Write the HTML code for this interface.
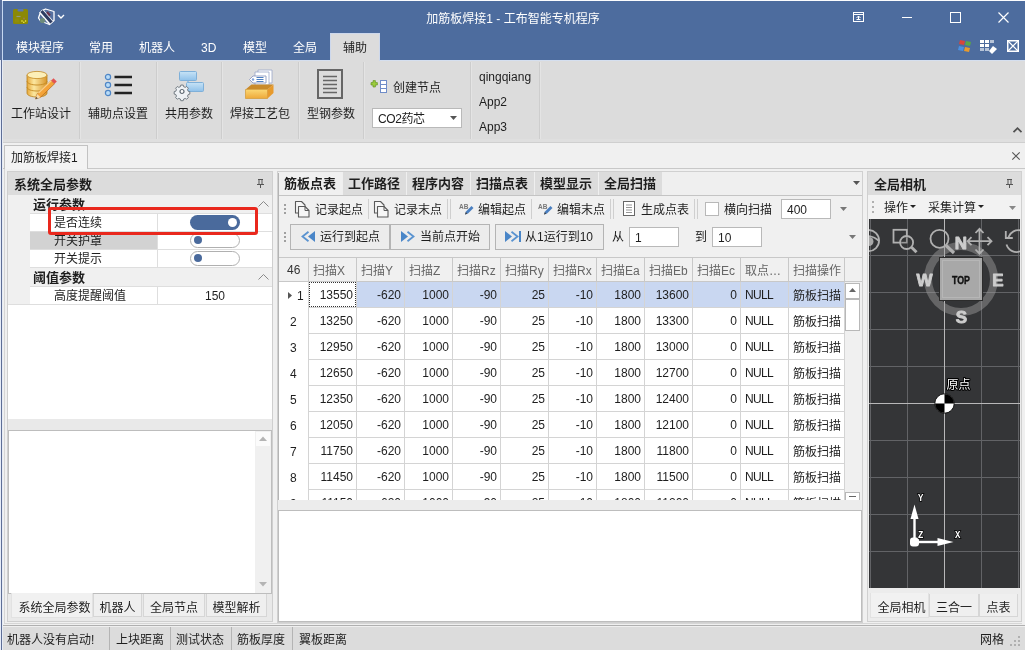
<!DOCTYPE html>
<html lang="zh-CN">
<head>
<meta charset="utf-8">
<title>加筋板焊接1 - 工布智能专机程序</title>
<style>
*{box-sizing:border-box;margin:0;padding:0}
html,body{width:1025px;height:650px;overflow:hidden;background:#f0f0f0}
body{position:relative;font-family:"Liberation Sans","Noto Sans CJK SC",sans-serif;font-size:12px;color:#1e1e1e;line-height:16px}
#app{position:absolute;left:0;top:0;width:1025px;height:650px;will-change:transform}
.a{position:absolute}
.t{position:absolute;white-space:nowrap;line-height:16px;height:16px;margin-top:1px}
.w{color:#fff}
.b{font-weight:bold}
.c{text-align:center}
.r{text-align:right}
svg{position:absolute;overflow:visible}
#title{left:3px;top:1px;width:1022px;height:59px;background:#4d6c9e}
#acttab{left:330px;top:33px;width:50px;height:28px;background:#dcdcdc;border:1px solid #cdd8ec;border-bottom:none}
#ribbon{left:3px;top:60px;width:1022px;height:83px;background:#dcdcdc}
.rs{position:absolute;top:62px;width:2px;height:77px;border-left:1px solid #cdcdcd;border-right:1px solid #e4e4e4}
.panel{position:absolute;background:#f0f0f0;border:1px solid #c6c6c6}
.hd{position:absolute;background:#dcdcdc}
.white{position:absolute;background:#fff}
.tab{position:absolute;height:24px;line-height:23px;text-align:center;white-space:nowrap}
.btab{position:absolute;height:23px;line-height:22px;padding-top:3px;text-align:center;white-space:nowrap;border:1px solid #d6d6d6;border-top:none;background:#efefef}
.inp{position:absolute;background:#fff;border:1px solid #b9b9b9;line-height:21px;padding-left:5px}
.btn{position:absolute;background:#ececec;border:1px solid #b4b4b4}
.hc{position:absolute;top:258px;height:24px;line-height:23px;padding-top:2px;border-right:1px solid #c8c8c8;color:#666;padding-left:4px;white-space:nowrap;overflow:hidden}
.row{position:absolute;left:279px;width:566px;height:26px;background:#fff;overflow:hidden}
.row span{position:absolute;top:0;height:26px;line-height:27px;border-right:1px solid #d4d4d4;border-bottom:1px solid #d4d4d4;text-align:right;padding-right:3px;white-space:nowrap}
.row span.l{text-align:left;padding-left:4px;padding-right:0}
.row span.k{line-height:29px}
.row span.n{letter-spacing:-.7px}
.sel span.s{background:#c9d7f1}
.sb{position:absolute;height:24px;line-height:24px;top:628px;white-space:nowrap}
.sbs{position:absolute;top:627px;width:1px;height:23px;background:#b4b4b4}
</style>
</head>
<body>
<div id="app">
<div class="a" style="left:0;top:0;width:2px;height:60px;background:#58709e"></div><div class="a" style="left:2px;top:0;width:1px;height:60px;background:#c6d8f2"></div><div class="a" style="left:0;top:60px;width:1px;height:590px;background:#e6ecf8"></div><div class="a" style="left:1px;top:60px;width:1px;height:590px;background:#5e6e96"></div><div class="a" style="left:2px;top:60px;width:1px;height:590px;background:#e6ebf4"></div><div class="a" style="left:2px;top:0;width:1023px;height:1px;background:#fbfcfe"></div><div id="title" class="a"></div><div id="ribbon" class="a"></div><div class="a" style="left:3px;top:60px;width:1022px;height:1px;background:#d5dfef"></div><div id="acttab" class="a"></div><div class="t w c" style="left:313px;top:10px;width:400px">加筋板焊接1 - 工布智能专机程序</div><svg style="left:12px;top:8px" width="18" height="17" viewBox="0 0 18 17"><rect x="1" y="1" width="15" height="15" rx="1.500" fill="#8b8905"/><rect x="5.500" y="1" width="6" height="2.500" rx="1" fill="#5d76b0"/><path d="M4.500 8.500h4" stroke="#8e9a86" stroke-width="1.200"/><path d="M4 10.500v4M6 10.500v4" stroke="#96930a" stroke-width="1"/><circle cx="10" cy="13" r=".8" fill="#f6f24a"/><circle cx="11.800" cy="14.300" r=".8" fill="#f6f24a"/><circle cx="13.600" cy="13" r=".8" fill="#f6f24a"/><circle cx="12" cy="10.500" r="1" fill="#9a7a50"/></svg><svg style="left:37px;top:8px" width="30" height="18" viewBox="0 0 30 18"><path d="M4.500 3l4-2 8.500 2.500 0 9-4.500 4-9-3.500-2-3 1-3z" fill="#56709f" stroke="#fff" stroke-width="1.300" stroke-linejoin="round"/><path d="M4 3l10 11.500" stroke="#fff" stroke-width="5.500"/><path d="M4.500 3l10 11.500" stroke="#2e3d63" stroke-width="3.200"/><circle cx="5.500" cy="12.500" r="2.600" fill="#6e8c7c"/><path d="M10 4l3 3.500" stroke="#6b3048" stroke-width="2"/><path d="M21 7l3 3 3-3" fill="none" stroke="#fff" stroke-width="1.400"/></svg><svg style="left:853px;top:12px" width="12" height="11" viewBox="0 0 12 11"><rect x=".5" y=".5" width="10" height="9" fill="none" stroke="#fff"/><path d="M.5 2.5h10M5.5 8V4M3.5 6l2-2 2 2M3.5 7.500h4" fill="none" stroke="#fff"/></svg><div class="a" style="left:902px;top:17px;width:10px;height:1px;background:#fff"></div><div class="a" style="left:950px;top:12px;width:11px;height:11px;border:1px solid #fff"></div><svg style="left:998px;top:12px" width="11" height="11" viewBox="0 0 11 11"><path d="M.5 .5l10 10M10.500 .5l-10 10" stroke="#fff" stroke-width="1.200"/></svg><svg style="left:958px;top:39px" width="14" height="14" viewBox="0 0 14 14"><path d="M2 1l5 1-1 4-5-1z" fill="#d8453a"/><path d="M8 2l5 1-1 4-5-1z" fill="#5aa845"/><path d="M1 7l5 1-1 4-5-1z" fill="#4a8fe0"/><path d="M7 8l5 1-1 4-5-1z" fill="#e69a2e"/></svg><svg style="left:980px;top:40px" width="18" height="14" viewBox="0 0 18 14"><g fill="#fff"><rect x="0" y="0" width="4" height="3"/><rect x="5" y="0" width="4" height="3"/><rect x="10" y="0" width="4" height="3" opacity=".6"/><rect x="0" y="4" width="4" height="3"/><rect x="5" y="4" width="4" height="3"/><rect x="0" y="8" width="4" height="3" opacity=".6"/><rect x="5" y="8" width="4" height="3" opacity=".6"/><path d="M13 6l4 3-5 5-3-3z"/></g></svg><svg style="left:1007px;top:40px" width="12" height="12" viewBox="0 0 12 12"><rect x=".75" y=".75" width="10.500" height="10.500" fill="none" stroke="#fff" stroke-width="1.500"/><path d="M1 1l10 10M11 1l-10 10" stroke="#fff" stroke-width="1.200"/></svg><div class="t w" style="left:16px;top:39px;font-size:12px">模块程序</div><div class="t w" style="left:89px;top:39px;font-size:12px">常用</div><div class="t w" style="left:139px;top:39px;font-size:12px">机器人</div><div class="t w" style="left:201px;top:39px;font-size:12px">3D</div><div class="t w" style="left:243px;top:39px;font-size:12px">模型</div><div class="t w" style="left:293px;top:39px;font-size:12px">全局</div><div class="t" style="left:343px;top:39px">辅助</div><div class="rs" style="left:79px"></div><div class="rs" style="left:156px"></div><div class="rs" style="left:221px"></div><div class="rs" style="left:298px"></div><div class="rs" style="left:363px"></div><div class="rs" style="left:470px"></div><div class="rs" style="left:539px"></div><div class="t" style="left:11px;top:105px">工作站设计</div><div class="t" style="left:88px;top:105px">辅助点设置</div><div class="t" style="left:165px;top:105px">共用参数</div><div class="t" style="left:230px;top:105px">焊接工艺包</div><div class="t" style="left:307px;top:105px">型钢参数</div><svg style="left:24px;top:68px" width="34" height="34" viewBox="0 0 34 34"><defs><linearGradient id="gd" x1="0" x2="1"><stop offset="0" stop-color="#e8a93a"/><stop offset=".35" stop-color="#fbe7a0"/><stop offset="1" stop-color="#d9952a"/></linearGradient></defs><path d="M3 7v18c0 2.500 4.500 4 10 4s10-1.500 10-4V7z" fill="url(#gd)" stroke="#b8801f" stroke-width=".8"/><ellipse cx="13" cy="7" rx="10" ry="3.600" fill="#fcefb8" stroke="#c48a24" stroke-width=".8"/><path d="M3 13c0 2.500 4.500 4 10 4s10-1.500 10-4M3 19c0 2.500 4.500 4 10 4s10-1.500 10-4" fill="none" stroke="#c48a24" stroke-width=".9"/><path d="M11.500 31l1.700-5 14-13.500 3.300 3.300-14 13.500z" fill="#f4a338" stroke="#b5651d" stroke-width=".7"/><path d="M14.500 25l13-12.500" stroke="#fbd08a" stroke-width="1.200"/><path d="M27.200 12.500l2.300-2.200 3.300 3.300-2.300 2.200z" fill="#e25353"/><path d="M11.500 31l1.700-5 3.300 3.300z" fill="#f6dcae"/><path d="M11.500 31l.7-2.100 1.500 1.400z" fill="#333"/></svg>
<svg style="left:104px;top:73px" width="30" height="24" viewBox="0 0 30 24"><g fill="#b9dcf7" stroke="#4f86c6" stroke-width="1.200"><circle cx="4" cy="4" r="2.600"/><circle cx="4" cy="12" r="2.600"/><circle cx="4" cy="20" r="2.600"/></g><path d="M10.500 4h17.500M10.500 12h17.500M10.500 20h17.500" stroke="#222" stroke-width="2.400"/></svg>
<svg style="left:174px;top:70px" width="32" height="30" viewBox="0 0 32 30"><defs><linearGradient id="gb" x1="0" y1="0" x2="0" y2="1"><stop offset="0" stop-color="#c7e3f6"/><stop offset="1" stop-color="#8fc1ea"/></linearGradient></defs><path d="M14 10v7h6" fill="none" stroke="#8ab4d8" stroke-width="1.400"/><rect x="5.500" y="1.500" width="17" height="9" rx="1" fill="url(#gb)" stroke="#7fb0d9"/><rect x="12.500" y="12.500" width="17" height="9" rx="1" fill="url(#gb)" stroke="#7fb0d9"/><g transform="translate(8,21.500)"><path d="M-1.300-7h2.600l.5 1.800 1.700.7 1.600-.9 1.800 1.800-.9 1.600.7 1.700 1.800.5v2.600l-1.800.5-.7 1.700.9 1.600-1.800 1.800-1.600-.9-1.700.7-.5 1.800h-2.600l-.5-1.800-1.700-.7-1.600.9-1.800-1.800.9-1.600-.7-1.700-1.800-.5v-2.600l1.800-.5.7-1.700-.9-1.600 1.800-1.800 1.600.9 1.700-.7z" fill="#eef1f4" stroke="#5d6770" stroke-width=".9" transform="scale(.92)"/><circle r="2" fill="#fff" stroke="#5d6770" stroke-width="1.200"/></g></svg>
<svg style="left:243px;top:68px" width="34" height="33" viewBox="0 0 34 33"><defs><linearGradient id="gg" x1="0" y1="0" x2="0" y2="1"><stop offset="0" stop-color="#fbd773"/><stop offset="1" stop-color="#eea93a"/></linearGradient></defs><path d="M15 2h14v13H15z" fill="#fff" stroke="#9aa6c8" stroke-width=".8"/><path d="M12 4h14v13H12z" fill="#fff" stroke="#9aa6c8" stroke-width=".8"/><path d="M2.500 21.500l6-5h22l-6 5z" fill="#c98a2a"/><path d="M10 8l-3.500 3.500 3.500 3.500h13v-7z" fill="#fff" stroke="#8d99c0" stroke-width=".9"/><circle cx="10" cy="11.500" r="1.200" fill="#7ea0d8"/><path d="M13.500 9.500h7M13.500 11.500h7M13.500 13.500h7" stroke="#4f80c0" stroke-width="1"/><path d="M2.500 21.500h22v9h-22z" fill="url(#gg)" stroke="#d39a34" stroke-width=".7"/><path d="M24.500 21.500l6-5v8.500l-6 5.500z" fill="#e79a2c"/></svg>
<svg style="left:316px;top:68px" width="28" height="32" viewBox="0 0 28 32"><rect x="2" y="2" width="24" height="28" fill="none" stroke="#666" stroke-width="2"/><path d="M7 8.500h14M7 12.500h14M7 16.500h14M7 20.500h14M7 24.500h14" stroke="#666" stroke-width="1.600"/></svg>
<svg style="left:371px;top:79px" width="17" height="15" viewBox="0 0 17 15"><path d="M2.500 2h3v2.500h2.500v3h-2.500v2.500h-3v-2.500h-2.500v-3h2.500z" fill="#9ccc3c" stroke="#5f8f1f" stroke-width=".8" transform="scale(.8) translate(0,0)"/><rect x="9.500" y="1.500" width="6" height="12" fill="#fff" stroke="#6f8cc8"/><path d="M9.500 5.500h6M9.500 9.500h6" stroke="#6f8cc8"/></svg>
<div class="t" style="left:393px;top:79px">创建节点</div><div class="inp" style="left:372px;top:108px;width:90px;height:20px;letter-spacing:-.4px">CO2药芯</div><svg style="left:450px;top:116px" width="7" height="4" viewBox="0 0 7 4"><path d="M0 0h7l-3.500 4z" fill="#555"/></svg><div class="t" style="left:479px;top:68px">qingqiang</div><div class="t" style="left:479px;top:93px">App2</div><div class="t" style="left:479px;top:118px">App3</div><svg style="left:1013px;top:127px" width="9" height="6" viewBox="0 0 9 6"><path d="M.5 5.200l4-4 4 4" fill="none" stroke="#505050" stroke-width="1.700"/></svg><div class="a" style="left:3px;top:139px;width:1022px;height:3px;background:#dfdfdf"></div><div class="a" style="left:3px;top:142px;width:1022px;height:1px;background:#cfcfcf"></div><div class="a" style="left:3px;top:168px;width:1022px;height:1px;background:#c8c8c8"></div><div class="a" style="left:4px;top:145px;width:84px;height:24px;background:#f3f3f3;border:1px solid #c2c2c2;border-bottom:none"></div><div class="t" style="left:11px;top:149px">加筋板焊接1</div><svg style="left:1012px;top:152px" width="8" height="8" viewBox="0 0 8 8"><path d="M.3 .3l7.400 7.400M7.700 .3l-7.400 7.400" stroke="#555" stroke-width="1.100"/></svg><div class="a" style="left:7px;top:171px;width:266px;height:451px;background:#e9e9e9;border:1px solid #cfcfcf"></div>
<div class="hd" style="left:8px;top:172px;width:264px;height:23px"></div>
<div class="t b" style="left:14px;top:176px;font-size:13px">系统全局参数</div>
<svg style="left:257px;top:179px" width="7" height="9" viewBox="0 0 7 9"><path d="M1 .5h5M2 .5v5M5 .5v5M0 5.500h7M3.500 5.500v3.500" fill="none" stroke="#555" stroke-width="1"/></svg>
<div class="white" style="left:8px;top:195px;width:264px;height:224px"></div>
<div class="a" style="left:8px;top:195px;width:264px;height:18px;background:#f0f0f0"></div>
<div class="a" style="left:8px;top:213px;width:22px;height:54px;background:#f0f0f0"></div>
<div class="a" style="left:8px;top:267px;width:264px;height:19px;background:#f0f0f0"></div>
<div class="a" style="left:8px;top:286px;width:22px;height:18px;background:#f0f0f0"></div>
<div class="a" style="left:30px;top:231px;width:127px;height:18px;background:#d2d2d2"></div>
<div class="a" style="left:30px;top:213px;width:242px;height:1px;background:#dedede"></div>
<div class="a" style="left:30px;top:231px;width:242px;height:1px;background:#dedede"></div>
<div class="a" style="left:30px;top:249px;width:242px;height:1px;background:#dedede"></div>
<div class="a" style="left:30px;top:267px;width:242px;height:1px;background:#dedede"></div>
<div class="a" style="left:30px;top:286px;width:242px;height:1px;background:#dedede"></div>
<div class="a" style="left:8px;top:304px;width:264px;height:1px;background:#dedede"></div>
<div class="a" style="left:157px;top:213px;width:1px;height:54px;background:#dedede"></div>
<div class="a" style="left:157px;top:286px;width:1px;height:18px;background:#dedede"></div>
<div class="t b" style="left:33px;top:196px;font-size:13px">运行参数</div>
<div class="t b" style="left:33px;top:269px;font-size:13px">阈值参数</div>
<svg style="left:258px;top:201px" width="11" height="6" viewBox="0 0 11 6"><path d="M.5 5.500l5-5 5 5" fill="none" stroke="#8a8a8a" stroke-width="1"/></svg>
<svg style="left:258px;top:274px" width="11" height="6" viewBox="0 0 11 6"><path d="M.5 5.500l5-5 5 5" fill="none" stroke="#8a8a8a" stroke-width="1"/></svg>
<div class="t" style="left:54px;top:214px">是否连续</div>
<div class="t" style="left:54px;top:232px">开关护罩</div>
<div class="t" style="left:54px;top:250px">开关提示</div>
<div class="t" style="left:54px;top:287px">高度提醒阈值</div>
<div class="t" style="left:205px;top:287px">150</div>
<div class="a" style="left:190px;top:215px;width:50px;height:15px;border-radius:8px;background:#4a6a9c"></div>
<div class="a" style="left:228px;top:218px;width:9px;height:9px;border-radius:5px;background:#fff"></div>
<div class="a" style="left:190px;top:233px;width:50px;height:15px;border-radius:8px;background:#fff;border:1px solid #b0b0b0"></div>
<div class="a" style="left:194px;top:236px;width:8px;height:8px;border-radius:4px;background:#4a6a9c"></div>
<div class="a" style="left:190px;top:251px;width:50px;height:15px;border-radius:8px;background:#fff;border:1px solid #b0b0b0"></div>
<div class="a" style="left:194px;top:254px;width:8px;height:8px;border-radius:4px;background:#4a6a9c"></div>
<div class="a" style="left:48px;top:207px;width:210px;height:28px;border:3px solid #e9281d;border-radius:3px"></div>
<div class="white" style="left:8px;top:430px;width:264px;height:164px;border:1px solid #bdbdbd"></div>
<div class="a" style="left:255px;top:431px;width:16px;height:162px;background:#f0f0f0"></div>
<div class="a" style="left:256px;top:432px;width:14px;height:14px;background:#fbfbfb"></div>
<svg style="left:259px;top:436px" width="8" height="5" viewBox="0 0 8 5"><path d="M0 5l4-4.500 4 4.500z" fill="#b4b4b4"/></svg>
<svg style="left:259px;top:582px" width="8" height="5" viewBox="0 0 8 5"><path d="M0 0l4 4.500 4-4.500z" fill="#b4b4b4"/></svg>
<div class="btab" style="left:11px;top:593px;width:82px;height:25px;background:#f1f1f1;padding-left:5px;padding-top:4px;border-color:#e2e2e2">系统全局参数</div>
<div class="btab" style="left:93px;top:594px;width:49px">机器人</div>
<div class="btab" style="left:143px;top:594px;width:62px">全局节点</div>
<div class="btab" style="left:206px;top:594px;width:61px">模型解析</div>
<div class="a" style="left:277px;top:171px;width:586px;height:452px;background:#ececec;border:1px solid #d0d0d0"></div>
<div class="a" style="left:278px;top:172px;width:584px;height:23px;background:#efefef"></div>
<div class="tab b" style="left:279px;top:172px;width:63px;background:#f0f0f0;font-size:13px;text-indent:-1px">筋板点表</div>
<div class="tab b" style="left:343px;top:172px;width:63px;background:#dcdcdc;font-size:13px;text-indent:-1px">工作路径</div>
<div class="tab b" style="left:407px;top:172px;width:63px;background:#dcdcdc;font-size:13px;text-indent:-1px">程序内容</div>
<div class="tab b" style="left:471px;top:172px;width:63px;background:#dcdcdc;font-size:13px;text-indent:-1px">扫描点表</div>
<div class="tab b" style="left:535px;top:172px;width:63px;background:#dcdcdc;font-size:13px;text-indent:-1px">模型显示</div>
<div class="tab b" style="left:599px;top:172px;width:63px;background:#dcdcdc;font-size:13px;text-indent:-1px">全局扫描</div>
<svg style="left:853px;top:181px" width="7" height="4" viewBox="0 0 7 4"><path d="M0 0h7l-3.500 4z" fill="#555"/></svg>
<div class="a" style="left:279px;top:195px;width:583px;height:62px;background:#f0f0f0;border-top:1px solid #c4c4c4"></div>
<div class="a" style="left:278px;top:173px;width:1px;height:449px;background:#b4b4b4"></div>
<svg style="left:284px;top:203px" width="3" height="13" viewBox="0 0 3 13"><g fill="#a0a0a0"><rect x="0" y="1" width="2" height="2"/><rect x="0" y="5" width="2" height="2"/><rect x="0" y="9" width="2" height="2"/></g></svg>
<svg style="left:284px;top:231px" width="3" height="13" viewBox="0 0 3 13"><g fill="#a0a0a0"><rect x="0" y="1" width="2" height="2"/><rect x="0" y="5" width="2" height="2"/><rect x="0" y="9" width="2" height="2"/></g></svg>
<svg style="left:294px;top:201px" width="16" height="16" viewBox="0 0 16 16"><path d="M1.500 .5h6l3.500 3.500v8h-9.500z" fill="#f6f6f6" stroke="#5a5a5a" stroke-width="1.100" stroke-linejoin="round"/><path d="M4.500 5.500h6.500l4 4v6.500h-10.500z" fill="#f6f6f6" stroke="#5a5a5a" stroke-width="1.100" stroke-linejoin="round"/><path d="M11 5.500v4h4" fill="none" stroke="#5a5a5a" stroke-width="1"/></svg>
<div class="t" style="left:315px;top:201px">记录起点</div>
<div class="a" style="left:368px;top:199px;width:1px;height:20px;background:#cfcfcf"></div>
<svg style="left:373px;top:201px" width="16" height="16" viewBox="0 0 16 16"><path d="M1.500 .5h6l3.500 3.500v8h-9.500z" fill="#f6f6f6" stroke="#5a5a5a" stroke-width="1.100" stroke-linejoin="round"/><path d="M4.500 5.500h6.500l4 4v6.500h-10.500z" fill="#f6f6f6" stroke="#5a5a5a" stroke-width="1.100" stroke-linejoin="round"/><path d="M11 5.500v4h4" fill="none" stroke="#5a5a5a" stroke-width="1"/></svg>
<div class="t" style="left:394px;top:201px">记录末点</div>
<div class="a" style="left:447px;top:199px;width:1px;height:20px;background:#cfcfcf"></div>
<div class="a" style="left:450px;top:199px;width:1px;height:20px;background:#cfcfcf"></div>
<svg style="left:458px;top:201px" width="16" height="16" viewBox="0 0 16 16"><text x="1" y="7.500" font-size="6.500" font-weight="bold" fill="#777" font-family="Liberation Sans,sans-serif">AB</text><path d="M7 13.500l1-3 5.500-5.500 2 2-5.500 5.500z" fill="#4a7fc0"/><path d="M7 13.500l.8-2.400 1.600 1.600z" fill="#444"/></svg>
<div class="t" style="left:478px;top:201px">编辑起点</div>
<div class="a" style="left:531px;top:199px;width:1px;height:20px;background:#cfcfcf"></div>
<svg style="left:537px;top:201px" width="16" height="16" viewBox="0 0 16 16"><text x="1" y="7.500" font-size="6.500" font-weight="bold" fill="#777" font-family="Liberation Sans,sans-serif">AB</text><path d="M7 13.500l1-3 5.500-5.500 2 2-5.500 5.500z" fill="#4a7fc0"/><path d="M7 13.500l.8-2.400 1.600 1.600z" fill="#444"/></svg>
<div class="t" style="left:557px;top:201px">编辑末点</div>
<div class="a" style="left:610px;top:199px;width:1px;height:20px;background:#cfcfcf"></div>
<div class="a" style="left:613px;top:199px;width:1px;height:20px;background:#cfcfcf"></div>
<svg style="left:623px;top:201px" width="12" height="16" viewBox="0 0 12 16"><rect x=".5" y=".5" width="11" height="14" fill="#fff" stroke="#666"/><path d="M3 4h6M3 6.500h6M3 9h6M3 11.500h6" stroke="#8a8a8a" stroke-width=".9"/></svg>
<div class="t" style="left:641px;top:201px">生成点表</div>
<div class="a" style="left:694px;top:199px;width:1px;height:20px;background:#cfcfcf"></div>
<div class="a" style="left:697px;top:199px;width:1px;height:20px;background:#cfcfcf"></div>
<div class="a" style="left:705px;top:202px;width:14px;height:14px;background:#fff;border:1px solid #b8b8b8"></div>
<div class="t" style="left:724px;top:201px">横向扫描</div>
<div class="inp" style="left:781px;top:199px;width:50px;height:20px">400</div>
<svg style="left:840px;top:207px" width="7" height="4" viewBox="0 0 7 4"><path d="M0 0h7l-3.500 4z" fill="#777"/></svg>
<div class="btn" style="left:290px;top:224px;width:100px;height:26px"></div>
<div class="btn" style="left:390px;top:224px;width:100px;height:26px"></div>
<div class="btn" style="left:495px;top:224px;width:109px;height:26px"></div>
<svg style="left:301px;top:231px" width="14" height="11" viewBox="0 0 14 11"><path d="M14 0v11l-7-5.500z" fill="#4a86c8"/><path d="M7.500 .8l-6 4.700 6 4.700" fill="none" stroke="#5a93d0" stroke-width="1.800"/></svg>
<div class="t" style="left:320px;top:228px">运行到起点</div>
<svg style="left:401px;top:231px" width="14" height="11" viewBox="0 0 14 11"><path d="M0 0v11l7-5.500z" fill="#4a86c8"/><path d="M6.500 .8l6 4.700-6 4.700" fill="none" stroke="#5a93d0" stroke-width="1.800"/></svg>
<div class="t" style="left:420px;top:228px">当前点开始</div>
<svg style="left:505px;top:231px" width="16" height="11" viewBox="0 0 16 11"><path d="M0 0v11l7-5.500zM14 0h2v11h-2z" fill="#4a86c8"/><path d="M6.500 .8l6 4.700-6 4.700" fill="none" stroke="#5a93d0" stroke-width="1.800"/></svg>
<div class="t" style="left:525px;top:228px">从1运行到10</div>
<div class="t" style="left:612px;top:228px">从</div>
<div class="inp" style="left:629px;top:227px;width:50px;height:20px">1</div>
<div class="t" style="left:695px;top:228px">到</div>
<div class="inp" style="left:712px;top:227px;width:50px;height:20px">10</div>
<svg style="left:849px;top:235px" width="7" height="4" viewBox="0 0 7 4"><path d="M0 0h7l-3.500 4z" fill="#777"/></svg>
<div class="a" style="left:279px;top:257px;width:583px;height:25px;background:#f0f0f0;border-top:1px solid #c8c8c8;border-bottom:1px solid #c8c8c8"></div>
<div class="hc" style="left:279px;width:30px;color:#333;padding-left:8px;padding-top:1px">46</div>
<div class="hc" style="left:309px;width:48px">扫描X</div>
<div class="hc" style="left:357px;width:48px">扫描Y</div>
<div class="hc" style="left:405px;width:48px">扫描Z</div>
<div class="hc" style="left:453px;width:48px">扫描Rz</div>
<div class="hc" style="left:501px;width:48px">扫描Ry</div>
<div class="hc" style="left:549px;width:48px">扫描Rx</div>
<div class="hc" style="left:597px;width:48px">扫描Ea</div>
<div class="hc" style="left:645px;width:48px">扫描Eb</div>
<div class="hc" style="left:693px;width:48px">扫描Ec</div>
<div class="hc" style="left:741px;width:48px">取点…</div>
<div class="hc" style="left:789px;width:56px">扫描操作</div>
<div class="a" style="left:279px;top:282px;width:583px;height:218px;background:#fff;overflow:hidden">
<div class="row sel" style="left:0;top:0px"><span style="left:0;width:30px;border-bottom:none;line-height:29px;text-align:left;padding-left:18px">1</span><span style="left:30px;width:48px">13550</span><span class="s" style="left:78px;width:48px">-620</span><span class="s" style="left:126px;width:48px">1000</span><span class="s" style="left:174px;width:48px">-90</span><span class="s" style="left:222px;width:48px">25</span><span class="s" style="left:270px;width:48px">-10</span><span class="s" style="left:318px;width:48px">1800</span><span class="s" style="left:366px;width:48px">13600</span><span class="s" style="left:414px;width:48px">0</span><span class="l s n" style="left:462px;width:48px">NULL</span><span class="l s k" style="left:510px;width:56px">筋板扫描</span></div>
<div class="row" style="left:0;top:26px"><span style="left:0;width:30px;border-bottom:none;line-height:29px;text-align:left;padding-left:11px">2</span><span style="left:30px;width:48px">13250</span><span class="s" style="left:78px;width:48px">-620</span><span class="s" style="left:126px;width:48px">1000</span><span class="s" style="left:174px;width:48px">-90</span><span class="s" style="left:222px;width:48px">25</span><span class="s" style="left:270px;width:48px">-10</span><span class="s" style="left:318px;width:48px">1800</span><span class="s" style="left:366px;width:48px">13300</span><span class="s" style="left:414px;width:48px">0</span><span class="l s n" style="left:462px;width:48px">NULL</span><span class="l s k" style="left:510px;width:56px">筋板扫描</span></div>
<div class="row" style="left:0;top:52px"><span style="left:0;width:30px;border-bottom:none;line-height:29px;text-align:left;padding-left:11px">3</span><span style="left:30px;width:48px">12950</span><span class="s" style="left:78px;width:48px">-620</span><span class="s" style="left:126px;width:48px">1000</span><span class="s" style="left:174px;width:48px">-90</span><span class="s" style="left:222px;width:48px">25</span><span class="s" style="left:270px;width:48px">-10</span><span class="s" style="left:318px;width:48px">1800</span><span class="s" style="left:366px;width:48px">13000</span><span class="s" style="left:414px;width:48px">0</span><span class="l s n" style="left:462px;width:48px">NULL</span><span class="l s k" style="left:510px;width:56px">筋板扫描</span></div>
<div class="row" style="left:0;top:78px"><span style="left:0;width:30px;border-bottom:none;line-height:29px;text-align:left;padding-left:11px">4</span><span style="left:30px;width:48px">12650</span><span class="s" style="left:78px;width:48px">-620</span><span class="s" style="left:126px;width:48px">1000</span><span class="s" style="left:174px;width:48px">-90</span><span class="s" style="left:222px;width:48px">25</span><span class="s" style="left:270px;width:48px">-10</span><span class="s" style="left:318px;width:48px">1800</span><span class="s" style="left:366px;width:48px">12700</span><span class="s" style="left:414px;width:48px">0</span><span class="l s n" style="left:462px;width:48px">NULL</span><span class="l s k" style="left:510px;width:56px">筋板扫描</span></div>
<div class="row" style="left:0;top:104px"><span style="left:0;width:30px;border-bottom:none;line-height:29px;text-align:left;padding-left:11px">5</span><span style="left:30px;width:48px">12350</span><span class="s" style="left:78px;width:48px">-620</span><span class="s" style="left:126px;width:48px">1000</span><span class="s" style="left:174px;width:48px">-90</span><span class="s" style="left:222px;width:48px">25</span><span class="s" style="left:270px;width:48px">-10</span><span class="s" style="left:318px;width:48px">1800</span><span class="s" style="left:366px;width:48px">12400</span><span class="s" style="left:414px;width:48px">0</span><span class="l s n" style="left:462px;width:48px">NULL</span><span class="l s k" style="left:510px;width:56px">筋板扫描</span></div>
<div class="row" style="left:0;top:130px"><span style="left:0;width:30px;border-bottom:none;line-height:29px;text-align:left;padding-left:11px">6</span><span style="left:30px;width:48px">12050</span><span class="s" style="left:78px;width:48px">-620</span><span class="s" style="left:126px;width:48px">1000</span><span class="s" style="left:174px;width:48px">-90</span><span class="s" style="left:222px;width:48px">25</span><span class="s" style="left:270px;width:48px">-10</span><span class="s" style="left:318px;width:48px">1800</span><span class="s" style="left:366px;width:48px">12100</span><span class="s" style="left:414px;width:48px">0</span><span class="l s n" style="left:462px;width:48px">NULL</span><span class="l s k" style="left:510px;width:56px">筋板扫描</span></div>
<div class="row" style="left:0;top:156px"><span style="left:0;width:30px;border-bottom:none;line-height:29px;text-align:left;padding-left:11px">7</span><span style="left:30px;width:48px">11750</span><span class="s" style="left:78px;width:48px">-620</span><span class="s" style="left:126px;width:48px">1000</span><span class="s" style="left:174px;width:48px">-90</span><span class="s" style="left:222px;width:48px">25</span><span class="s" style="left:270px;width:48px">-10</span><span class="s" style="left:318px;width:48px">1800</span><span class="s" style="left:366px;width:48px">11800</span><span class="s" style="left:414px;width:48px">0</span><span class="l s n" style="left:462px;width:48px">NULL</span><span class="l s k" style="left:510px;width:56px">筋板扫描</span></div>
<div class="row" style="left:0;top:182px"><span style="left:0;width:30px;border-bottom:none;line-height:29px;text-align:left;padding-left:11px">8</span><span style="left:30px;width:48px">11450</span><span class="s" style="left:78px;width:48px">-620</span><span class="s" style="left:126px;width:48px">1000</span><span class="s" style="left:174px;width:48px">-90</span><span class="s" style="left:222px;width:48px">25</span><span class="s" style="left:270px;width:48px">-10</span><span class="s" style="left:318px;width:48px">1800</span><span class="s" style="left:366px;width:48px">11500</span><span class="s" style="left:414px;width:48px">0</span><span class="l s n" style="left:462px;width:48px">NULL</span><span class="l s k" style="left:510px;width:56px">筋板扫描</span></div>
<div class="row" style="left:0;top:208px"><span style="left:0;width:30px;border-bottom:none;line-height:29px;text-align:left;padding-left:11px">9</span><span style="left:30px;width:48px">11150</span><span class="s" style="left:78px;width:48px">-620</span><span class="s" style="left:126px;width:48px">1000</span><span class="s" style="left:174px;width:48px">-90</span><span class="s" style="left:222px;width:48px">25</span><span class="s" style="left:270px;width:48px">-10</span><span class="s" style="left:318px;width:48px">1800</span><span class="s" style="left:366px;width:48px">11200</span><span class="s" style="left:414px;width:48px">0</span><span class="l s n" style="left:462px;width:48px">NULL</span><span class="l s k" style="left:510px;width:56px">筋板扫描</span></div>
</div>
<div class="a" style="left:309px;top:282px;width:47px;height:25px;border:1px dotted #333"></div>
<svg style="left:288px;top:292px" width="4" height="7" viewBox="0 0 4 7"><path d="M0 0l4 3.500-4 3.500z" fill="#555"/></svg>
<div class="a" style="left:845px;top:282px;width:17px;height:218px;background:#f0f0f0"></div>
<div class="a" style="left:845px;top:283px;width:15px;height:16px;background:#fff;border:1px solid #b8b8b8"></div>
<svg style="left:849px;top:288px" width="7" height="4" viewBox="0 0 7 4"><path d="M0 4l3.500-4 3.500 4z" fill="#666"/></svg>
<div class="a" style="left:845px;top:299px;width:15px;height:32px;background:#fff;border:1px solid #b8b8b8"></div>
<div class="a" style="left:845px;top:492px;width:15px;height:9px;background:#fff;border:1px solid #b8b8b8;border-bottom:none"></div>
<div class="a" style="left:849px;top:496px;width:7px;height:1px;background:#666"></div>
<div class="a" style="left:278px;top:500px;width:584px;height:10px;background:#ececec"></div>
<div class="white" style="left:278px;top:510px;width:584px;height:112px;border:1px solid #bdbdbd"></div>
<div class="a" style="left:867px;top:171px;width:155px;height:451px;background:#ececec;border:1px solid #d0d0d0"></div>
<div class="hd" style="left:868px;top:172px;width:153px;height:23px"></div>
<div class="t b" style="left:874px;top:176px;font-size:13px">全局相机</div>
<svg style="left:1006px;top:179px" width="7" height="9" viewBox="0 0 7 9"><path d="M1 .5h5M2 .5v5M5 .5v5M0 5.500h7M3.500 5.500v3.500" fill="none" stroke="#555" stroke-width="1"/></svg>
<div class="a" style="left:868px;top:195px;width:153px;height:24px;background:#f2f2f2"></div>
<svg style="left:872px;top:201px" width="3" height="13" viewBox="0 0 3 13"><g fill="#b0b0b0"><rect x="0" y="0" width="2" height="2"/><rect x="0" y="5" width="2" height="2"/><rect x="0" y="10" width="2" height="2"/></g></svg>
<div class="t" style="left:884px;top:199px">操作</div>
<svg style="left:910px;top:205px" width="6" height="3" viewBox="0 0 6 3"><path d="M0 0h6l-3 3z" fill="#222"/></svg>
<div class="t" style="left:928px;top:199px">采集计算</div>
<svg style="left:978px;top:205px" width="6" height="3" viewBox="0 0 6 3"><path d="M0 0h6l-3 3z" fill="#222"/></svg>
<svg style="left:1009px;top:206px" width="7" height="4" viewBox="0 0 7 4"><path d="M0 0h7l-3.500 4z" fill="#888"/></svg>
<svg style="left:869px;top:219px;overflow:hidden" width="151" height="369" viewBox="0 0 151 369"><rect width="151" height="369" fill="#343537"/><path d="M1.5 0V369M38.5 0V369M112.5 0V369M149.5 0V369M0 36.5H151M0 73.5H151M0 110.5H151M0 147.5H151M0 221.5H151M0 258.5H151M0 295.5H151M0 332.5H151" stroke="#626366" stroke-width="1"/><path d="M75.500 0V369M0 184.500H151" stroke="#b8b8b9" stroke-width="1"/><circle cx="92" cy="60" r="33" fill="none" stroke="#a0a0a0" stroke-opacity=".46" stroke-width="8"/><rect x="70.500" y="38.500" width="43" height="43" fill="#a8a8a8" stroke="#2c2c2c" stroke-width="1"/><rect x="73.500" y="41.500" width="37" height="37" fill="none" stroke="#b6b6b6" stroke-width="1"/><text x="92" y="64.500" font-size="11" font-weight="bold" text-anchor="middle" fill="#111" stroke="#111" stroke-width=".4" textLength="18" lengthAdjust="spacingAndGlyphs" font-family="Liberation Sans,Noto Sans CJK SC,sans-serif">TOP</text><text x="92" y="30" font-size="17" font-weight="bold" text-anchor="middle" fill="#cdcdcd" stroke="#cdcdcd" stroke-width=".9" stroke-linejoin="round" font-family="Liberation Sans,Noto Sans CJK SC,sans-serif">N</text><text x="92.5" y="104" font-size="17" font-weight="bold" text-anchor="middle" fill="#cdcdcd" stroke="#cdcdcd" stroke-width=".9" stroke-linejoin="round" font-family="Liberation Sans,Noto Sans CJK SC,sans-serif">S</text><text x="55.5" y="67" font-size="17" font-weight="bold" text-anchor="middle" fill="#cdcdcd" stroke="#cdcdcd" stroke-width=".9" stroke-linejoin="round" font-family="Liberation Sans,Noto Sans CJK SC,sans-serif">W</text><text x="129" y="67" font-size="17" font-weight="bold" text-anchor="middle" fill="#cdcdcd" stroke="#cdcdcd" stroke-width=".9" stroke-linejoin="round" font-family="Liberation Sans,Noto Sans CJK SC,sans-serif">E</text><circle cx="-.5" cy="21.600" r="10.600" stroke="#b0b0b0" fill="none" stroke-width="1.800"/><path d="M-6 17q10 -1 16 5" stroke="#b0b0b0" fill="none" stroke-width="1.800"/><path d="M0 18a4.500 4.500 0 0 1 0 9z" fill="#a9a9a9"/><rect x="24.500" y="10.800" width="13.300" height="12.800" stroke="#b0b0b0" fill="none" stroke-width="1.800"/><circle cx="37.600" cy="23.500" r="6.500" fill="#343537" fill-opacity=".55" stroke="#b0b0b0"  stroke-width="1.800"/><path d="M37.800 18.500v5.200h-5.500" stroke="#9a9a9a" fill="none" stroke-width="1.300"/><path d="M42.500 28.300l5 5" stroke="#b0b0b0" stroke-width="3"/><circle cx="70.500" cy="19.800" r="9" stroke="#b0b0b0" fill="none" stroke-width="1.800"/><path d="M77 26.500l8 7.500" stroke="#b0b0b0" stroke-width="3.200"/><path d="M110.500 10.500v23.500M99 22.200h23M106.500 14l4-4.200 4 4.200M106.500 30.500l4 4.200 4-4.200M102.500 18.200l-4 4 4 4M118.500 18.200l4 4-4 4" stroke="#b0b0b0" fill="none" stroke-width="1.800"/><path d="M152 11.500A10.500 10.500 0 0 0 139.500 18" stroke="#b0b0b0" fill="none" stroke-width="1.800"/><path d="M136.800 12v7h7" stroke="#b0b0b0" fill="none" stroke-width="1.800" stroke-width="2.200"/><path d="M137.500 25.500A10.500 10.500 0 0 0 152 32" stroke="#b0b0b0" fill="none" stroke-width="1.800"/><circle cx="75.500" cy="184.500" r="9.700" fill="#fff" stroke="#000" stroke-width=".8"/><path d="M75.500 184.500V175A9.500 9.500 0 0 1 85 184.500zM75.500 184.500V194A9.500 9.500 0 0 1 66 184.500z" fill="#000"/><text x="77.500" y="170" font-size="12" fill="#fff" stroke="#000" stroke-width="2" paint-order="stroke" stroke-linejoin="round" font-family="Liberation Sans,Noto Sans CJK SC,sans-serif">原点</text><path d="M45.500 323V299" stroke="#fff" stroke-width="2.400"/><path d="M41.500 300l4-14.500 4 14.500z" fill="#fff"/><path d="M45.500 323H69" stroke="#fff" stroke-width="2.400"/><path d="M68.500 319l16 4-16 4z" fill="#fff"/><rect x="41" y="318.500" width="9" height="9" rx="3" fill="#fff"/><text transform="translate(49,282) scale(.78,1)" font-size="11.500" font-weight="bold" fill="#fff" stroke="#000" stroke-width="1.600" paint-order="stroke" font-family="Liberation Mono,monospace">Y</text><text transform="translate(49,319) scale(.78,1)" font-size="11.500" font-weight="bold" fill="#fff" stroke="#000" stroke-width="1.600" paint-order="stroke" font-family="Liberation Mono,monospace">Z</text><text transform="translate(86,319) scale(.78,1)" font-size="11.500" font-weight="bold" fill="#fff" stroke="#000" stroke-width="1.600" paint-order="stroke" font-family="Liberation Mono,monospace">X</text></svg>
<div class="a" style="left:868px;top:588px;width:153px;height:6px;background:#ececec"></div>
<div class="btab" style="left:870px;top:593px;width:59px;height:25px;background:#f1f1f1;padding-left:4px;padding-top:4px;border-color:#e2e2e2">全局相机</div>
<div class="btab" style="left:929px;top:594px;width:50px">三合一</div>
<div class="btab" style="left:979px;top:594px;width:39px">点表</div>
<div class="a" style="left:4px;top:169px;width:1px;height:455px;background:#d6d6d6"></div><div class="a" style="left:4px;top:623px;width:1018px;height:1px;background:#d6d6d6"></div><div class="a" style="left:3px;top:625px;width:1022px;height:25px;background:#dcdcdc;border-top:1px solid #b0b0b0"></div><div class="a" style="left:3px;top:626px;width:1022px;height:1px;background:#efefef"></div><div class="sb" style="left:7px">机器人没有启动!</div><div class="sb" style="left:116px">上块距离</div><div class="sb" style="left:176px">测试状态</div><div class="sb" style="left:237px">筋板厚度</div><div class="sb" style="left:299px">翼板距离</div><div class="sb" style="left:980px">网格</div><div class="sbs" style="left:109px"></div><div class="sbs" style="left:170px"></div><div class="sbs" style="left:231px"></div><div class="sbs" style="left:292px"></div><svg style="left:1010px;top:636px" width="12" height="12" viewBox="0 0 12 12"><g fill="#b0b0b0"><rect x="8" y="0" width="2" height="2"/><rect x="4" y="4" width="2" height="2"/><rect x="8" y="4" width="2" height="2"/><rect x="0" y="8" width="2" height="2"/><rect x="4" y="8" width="2" height="2"/><rect x="8" y="8" width="2" height="2"/></g></svg>
</div>
</body>
</html>
